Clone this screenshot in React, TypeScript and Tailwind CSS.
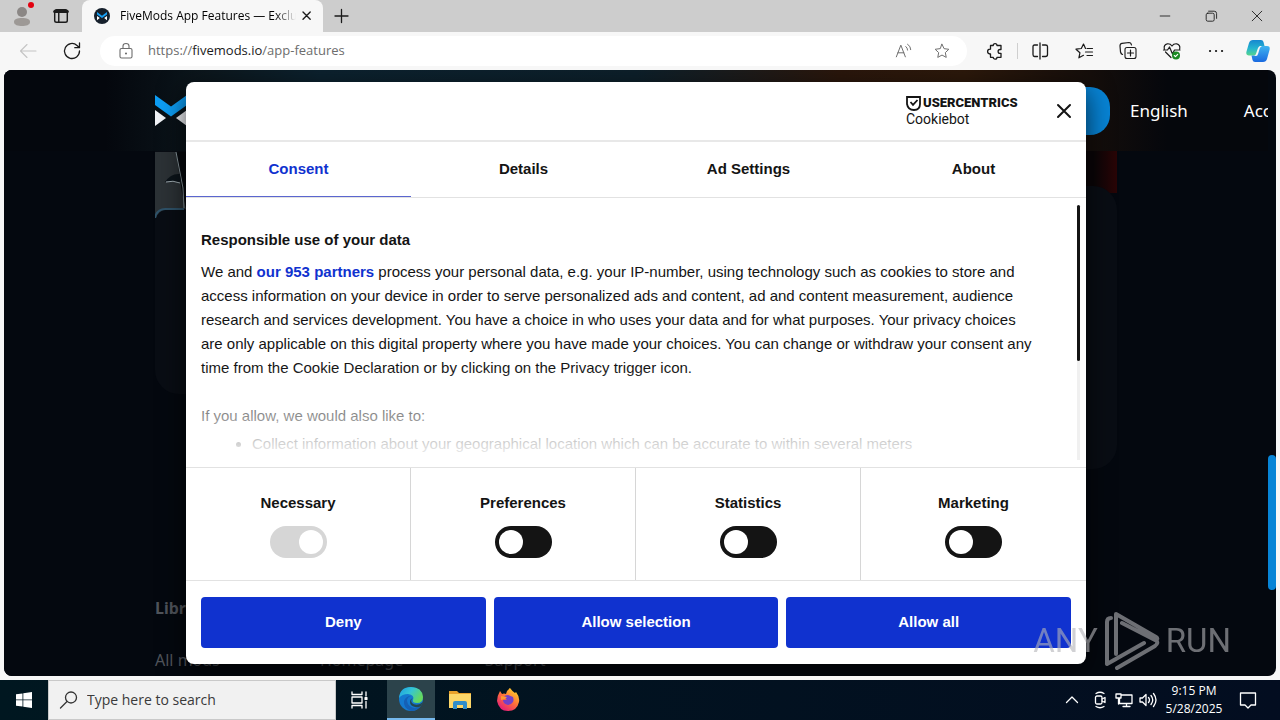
import { useState } from "react";
import type { ReactNode } from "react";
import clsx from "clsx";

const TABS = ["Consent", "Details", "Ad Settings", "About"];

const CATEGORIES = [
  { name: "Necessary", locked: true },
  { name: "Preferences", locked: false },
  { name: "Statistics", locked: false },
  { name: "Marketing", locked: false },
];

const ACTIONS = ["Deny", "Allow selection", "Allow all"];

interface IconProps {
  className?: string;
  children: ReactNode;
}

// 20x20 line icon used by the browser toolbar and the taskbar
function LineIcon({ className = "size-5", children }: IconProps) {
  return (
    <svg
      viewBox="0 0 20 20"
      className={clsx("shrink-0", className)}
      fill="none"
      stroke="currentColor"
      strokeWidth="1.1"
      strokeLinecap="round"
      strokeLinejoin="round"
      aria-hidden="true"
    >
      {children}
    </svg>
  );
}

const STAR = "M10 2.5l2.3 4.9 5.3.7-3.9 3.7 1 5.3L10 14.5l-4.7 2.6 1-5.3L2.4 8.1l5.3-.7z";

function TitleBar() {
  return (
    <div className="flex h-8 shrink-0 items-stretch bg-[#cdcdcd]">
      <div className="flex w-[82px] items-center gap-7 pl-3">
        <button aria-label="Profile" className="relative">
          <svg viewBox="0 0 20 20" className="size-5">
            <circle cx="10" cy="6" r="5" fill="#8b8785" />
            <path d="M2 16c0-3 3-4 8-4s8 1 8 4-4 4-8 4-8-1-8-4z" fill="#9d9996" />
          </svg>
          <span className="absolute -top-1 -right-0.5 size-1.5 rounded-full bg-[#e3000f]" />
        </button>
        <button aria-label="Tab actions" className="-ml-2">
          <LineIcon className="size-4.5">
            <rect x="3" y="3" width="14" height="14" rx="2" strokeWidth="1.6" />
            <path d="M3 5h14" strokeWidth="3.4" />
            <path d="M7.5 6v11" strokeWidth="1.6" />
          </LineIcon>
        </button>
      </div>
      <div className="flex w-[241px] items-center rounded-t-lg bg-[#f7f7f7] pr-2 pl-3">
        <svg viewBox="0 0 16 16" className="size-4 shrink-0" aria-hidden="true">
          <circle cx="8" cy="8" r="8" fill="#16202c" />
          <path d="M3 4l5 3.7L13 4v2.6L8 10 3 6.6z" fill="#18a0f5" />
          <path d="M3 8l2.8 2L3 12.2zM13 8l-2.8 2 2.8 2.2z" fill="#fff" />
        </svg>
        <span className="ml-2.5 w-[176px] overflow-hidden bg-linear-to-r from-black from-88% to-transparent bg-clip-text text-xs whitespace-nowrap text-transparent">
          FiveMods App Features — Exclusive
        </span>
        <button aria-label="Close tab" className="ml-auto">
          <LineIcon className="size-4">
            <path d="M5 5l9 9M14 5l-9 9" strokeWidth="1.7" />
          </LineIcon>
        </button>
      </div>
      <button aria-label="New tab" className="px-2">
        <LineIcon>
          <path d="M4 10h13M10.5 3.500v13" strokeWidth="1.3" />
        </LineIcon>
      </button>
      <div className="ml-auto flex">
        <button aria-label="Minimize" className="grid w-[46px] place-items-center">
          <LineIcon className="size-4">
            <path d="M4 10h12" />
          </LineIcon>
        </button>
        <button aria-label="Restore" className="grid w-[46px] place-items-center">
          <LineIcon className="size-4">
            <rect x="4" y="6.5" width="10" height="10" rx="2" />
            <path d="M7 4h7q3 0 3 3v6" />
          </LineIcon>
        </button>
        <button aria-label="Close window" className="grid w-[46px] place-items-center">
          <LineIcon className="size-4">
            <path d="M4 4l12 12M16 4L4 16" />
          </LineIcon>
        </button>
      </div>
    </div>
  );
}

function CopilotLogo() {
  return (
    <svg viewBox="0 0 24 24" className="size-6" aria-hidden="true">
      <defs>
        <linearGradient id="copilotLeft" x1="0" y1="0" x2="0" y2="1">
          <stop offset="0" stopColor="#1687d0" />
          <stop offset=".55" stopColor="#25b5cf" />
          <stop offset="1" stopColor="#56d58c" />
        </linearGradient>
        <linearGradient id="copilotRight" x1="0" y1="0" x2="0" y2="1">
          <stop offset="0" stopColor="#3fb4f0" />
          <stop offset="1" stopColor="#1a6ae0" />
        </linearGradient>
      </defs>
      <path d="M7 1h8q2 0 2.5 2l1 4h-3q-2 0-2.6 2l-1.5 5q-.8 2.5-3 2.5H3Q-.5 16.5.5 12.5L3 4q.9-3 4-3z" fill="url(#copilotLeft)" />
      <path d="M17 23H9q-2 0-2.5-2l-1-4.500h3q2 0 2.6-2l1.500-5q.8-2.500 3-2.500H21q3.500 0 2.500 4L21 20q-.9 3-4 3z" fill="url(#copilotRight)" />
      <path d="M14 7h2q-1.700.5-2.300 2.500l-1.500 5q-.7 2.500-2.200 2.500H8q1.500-.5 2.100-2.500l1.700-5q.6-2 2.200-2.500z" fill="#f7f7f7" />
    </svg>
  );
}

function Toolbar() {
  return (
    <div className="flex h-[38px] shrink-0 items-center bg-[#f7f7f7] pr-2.5 pl-[18px]">
      <button aria-label="Back" className="text-[#c4c4c4]">
        <LineIcon>
          <path d="M18 10H2.5M9 3.5L2.5 10 9 16.5" />
        </LineIcon>
      </button>
      <button aria-label="Refresh" className="ml-6">
        <LineIcon>
          <path d="M17.5 10A7.5 7.5 0 1 1 15 4.4l2.3 2.1M17.5 2v4.7h-4.7" strokeWidth="1.3" />
        </LineIcon>
      </button>
      <label className="ml-[18px] flex h-[30px] min-w-0 flex-1 items-center gap-3 rounded-full bg-white px-4 text-[#6d6d6d]">
        <LineIcon>
          <rect x="4" y="7.5" width="12" height="9.5" rx="1.5" />
          <path d="M7 7.5V5q0-2.500 3-2.500T13 5v2.500" />
          <circle cx="10" cy="12.5" r=".5" />
        </LineIcon>
        <span className="flex-1 text-[13px]">
          https://<span className="text-[#1b1b1b]">fivemods.io</span>/app-features
        </span>
        <button aria-label="Read aloud">
          <LineIcon className="size-4.5">
            <path d="M1.500 16.500l5-13 5 13M3.200 12h6.600M12 5q2 1.500 2 4M14 2.500q3.500 2 3.500 6" />
          </LineIcon>
        </button>
        <button aria-label="Add to favorites" className="ml-2">
          <LineIcon className="size-[18px]">
            <path d={STAR} />
          </LineIcon>
        </button>
      </label>
      <div className="ml-[18px] flex items-center gap-6">
        <button aria-label="Extensions">
          <LineIcon>
            <path d="M5.500 4.500h2.700a1.900 1.900 0 0 1 3.800 0h4v4h-1a1.900 1.900 0 0 0 0 3.800h1v4h-4a1.900 1.900 0 0 1-3.800 0H5.500V13H5a2.400 2.400 0 0 1 0-4.800h.5z" strokeWidth="1.300" />
          </LineIcon>
        </button>
        <div className="-mx-3 h-4 border-l border-[#cfcfcf]" />
        <button aria-label="Split screen">
          <LineIcon>
            <path d="M7.500 4h-3Q3 4 3 5.500v8q0 2 1.500 2h3M12.500 4h3q2 0 2 1.500v8q0 2-2 2h-3M10 2v16" strokeWidth="1.3" />
          </LineIcon>
        </button>
        <button aria-label="Favorites">
          <LineIcon>
            <path d="M11.500 7.500L9.500 3 7.300 7.500l-5.300.7 3.900 3.600-1 5 4.600-2.500M13 7.500h5.500M11.500 11h7M13 14.500h5.500" strokeWidth="1.2" />
          </LineIcon>
        </button>
        <button aria-label="Collections">
          <LineIcon>
            <rect x="7" y="6.500" width="11" height="11" rx="2" />
            <path d="M12.500 9v6M9.500 12h6M4.500 13.500Q3 13 2.500 11L2 5q0-2.500 2-2.700l7-.8q2 0 2.500 2.500" strokeWidth="1.2" />
          </LineIcon>
        </button>
        <button aria-label="Browser essentials">
          <LineIcon>
            <path d="M9 16.500L3.500 11M2.300 8q-.8-4.500 3-5.200 3-.3 4.700 2.200 1.700-2.500 4.700-2.200 3.800.7 3 5.200M1.500 9h4L7.500 6l3 7 2-4h5.500" strokeWidth="1.2" />
            <circle cx="14" cy="14.500" r="4" fill="#1c8a24" stroke="none" />
            <path d="M12.300 14.500l1.200 1.200 2.200-2.400" stroke="#fff" />
          </LineIcon>
        </button>
        <button aria-label="Settings and more">
          <LineIcon>
            <path d="M4 10h.1M10 10h.1M16 10h.1" strokeWidth="2.2" />
          </LineIcon>
        </button>
        <button aria-label="Copilot" className="-ml-1">
          <CopilotLogo />
        </button>
      </div>
    </div>
  );
}

/* Dimmed site content that stays visible around the consent dialog */
function SitePage() {
  return (
    <div className="flex h-full flex-col overflow-hidden bg-[#04080f]">
      <header className="shrink-0 bg-[linear-gradient(90deg,#04070d_8%,#0c171d_16%,#0c222f_25%,#0d202b_50%,#2b170c_66%,#2d190b_76%,#150e0b_86%,#05070c_92%)]">
        <div className="mx-auto flex h-[81px] w-full max-w-[962px] items-center">
          <svg viewBox="0 0 32 32" className="size-8" aria-label="FiveMods">
            <path d="M0 0l16 11.5L32 0v10L16 21.500 0 10z" fill="#0d9ef5" />
            <path d="M0 15l11 8-11 8zM32 15l-11 8 11 8z" fill="#f2f4f8" />
          </svg>
          <button className="ml-auto h-12 w-40 rounded-[20px] bg-[#0784d6]" aria-label="Download" />
          <nav className="flex w-[7px] font-['Noto_Sans'] text-[17px] whitespace-nowrap text-white">
            <a href="#language" className="ml-5">
              English
            </a>
            <a href="#account" className="ml-14">
              Account
            </a>
          </nav>
        </div>
      </header>
      <main className="mx-auto grid h-[430px] w-full max-w-[962px] shrink-0 grid-cols-2 items-start gap-4">
        <div className="h-[243px] overflow-hidden rounded-b-3xl bg-[#090d14]">
          <svg viewBox="0 0 100 67" className="h-[67px] w-[100px]" aria-hidden="true">
            <path d="M0 1h100v57H12Q3 60 1 67H0z" fill="#2c3236" />
            <path d="M21 1h79v57H31L27 42z" fill="#06090d" />
            <path d="M21 1l7 36 1 20" stroke="#8b999f" fill="none" />
            <path d="M0 67Q2 57 12 58h17" stroke="#2f536a" fill="none" strokeWidth="2" />
            <path d="M10 31q6-9 15-8l1 8z" fill="#0c141a" />
            <path d="M11 31q7-2 14 1" stroke="#a3afb4" fill="none" />
          </svg>
        </div>
        <div className="h-[318px] bg-[linear-gradient(90deg,#0a0507_95%,#2a0506)] bg-[length:100%_42px] bg-no-repeat pt-[35px]">
          <div className="h-full rounded-3xl bg-[#090d14]" />
        </div>
      </main>
      <footer className="mx-auto grid w-full max-w-[962px] grid-cols-[165px_165px_165px] gap-y-7 pt-[15px] font-['Noto_Sans'] text-base/6 text-[#50545b]">
        <h3 className="col-span-3 font-bold">Library</h3>
        <a href="#mods">All mods</a>
        <a href="#home">Homepage</a>
        <a href="#support">Support</a>
      </footer>
    </div>
  );
}

function UsercentricsLogo() {
  return (
    <div className="w-[117px] font-['Roboto',sans-serif] text-[#141414]">
      <div className="flex items-center gap-0.5 text-[13px]/4 font-black">
        <svg viewBox="0 0 15 15" className="size-[15px] shrink-0" fill="none" stroke="currentColor" strokeWidth="1.8" aria-hidden="true">
          <path d="M1 1h13v7q0 6-6 6T1 8z" />
          <path d="M4.500 6l2.500 2.800L11.500 4" />
        </svg>
        USERCENTRICS
      </div>
      <div className="text-sm/4">Cookiebot</div>
    </div>
  );
}

interface CategoryToggleProps {
  name: string;
  locked: boolean;
}

function CategoryToggle({ name, locked }: CategoryToggleProps) {
  const [checked, setChecked] = useState(locked);

  return (
    <label className="flex flex-col items-center gap-[11px] border-r border-[#d6d6d6] pt-[23px] pb-[22px] text-[15px]/6 font-bold last:border-r-0">
      {name}
      <input
        type="checkbox"
        role="switch"
        checked={checked}
        disabled={locked}
        onChange={(e) => setChecked(e.target.checked)}
        className="h-8 w-[57px] appearance-none rounded-full bg-[#141414] p-1 before:block before:size-6 before:rounded-full before:bg-white checked:before:ml-auto disabled:bg-[#d6d6d6]"
      />
    </label>
  );
}

function ConsentDialog() {
  const [activeTab, setActiveTab] = useState("Consent");

  return (
    <section
      role="dialog"
      aria-label="Cookie consent"
      className="w-full max-w-[900px] overflow-hidden rounded-lg bg-white font-['Liberation_Sans',Arial,sans-serif] text-[15px] text-[#141414] shadow-[0_8px_28px_rgba(0,0,0,0.7)]"
    >
      <div className="flex h-[60px] items-center justify-end gap-8 border-b-2 border-[#e8e8e8] pr-[13px]">
        <UsercentricsLogo />
        <button aria-label="Close">
          <svg viewBox="0 0 18 18" className="size-[18px]" stroke="currentColor" strokeWidth="2" strokeLinecap="round" aria-hidden="true">
            <path d="M3 3l12 12M15 3L3 15" />
          </svg>
        </button>
      </div>

      <div role="tablist" className="grid h-14 grid-cols-4 border-b border-[#e2e2e2]">
        {TABS.map((tab) => (
          <button
            key={tab}
            role="tab"
            aria-selected={tab === activeTab}
            onClick={() => setActiveTab(tab)}
            className={clsx(
              "border-b font-bold",
              tab === activeTab ? "border-[#5b66cf] text-[#1032cf]" : "border-transparent",
            )}
          >
            {tab}
          </button>
        ))}
      </div>

      <div className="relative h-[269px] overflow-hidden px-[15px] pt-[30px] leading-6">
        <h2 className="mb-2 font-bold">Responsible use of your data</h2>
        <p>
          We and{" "}
          <a href="#partners" className="font-bold text-[#1032cf]">
            our 953 partners
          </a>{" "}
          process your personal data, e.g. your IP-number, using technology such as cookies to store and
          <br />
          access information on your device in order to serve personalized ads and content, ad and content measurement, audience
          <br />
          research and services development. You have a choice in who uses your data and for what purposes. Your privacy choices
          <br />
          are only applicable on this digital property where you have made your choices. You can change or withdraw your consent any
          <br />
          time from the Cookie Declaration or by clicking on the Privacy trigger icon.
        </p>
        <p className="mt-6">If you allow, we would also like to:</p>
        <ul className="mt-1 list-disc pl-[51px]">
          <li>Collect information about your geographical location which can be accurate to within several meters</li>
        </ul>
        <div className="absolute inset-x-0 bottom-0 h-[100px] bg-linear-to-b from-white/0 to-white to-95%" />
        <div className="absolute top-[7px] right-[6px] bottom-[7px] w-[3px] bg-[#f0f0f0]">
          <div className="h-[156px] rounded-full bg-[#141414]" />
        </div>
      </div>

      <div className="grid grid-cols-4 border-y border-[#e2e2e2]">
        {CATEGORIES.map((category) => (
          <CategoryToggle key={category.name} {...category} />
        ))}
      </div>

      <div className="grid grid-cols-3 gap-2 px-[15px] py-4">
        {ACTIONS.map((action) => (
          <button key={action} className="h-[51px] rounded bg-[#1032cf] font-bold text-white">
            {action}
          </button>
        ))}
      </div>
    </section>
  );
}

function Watermark() {
  return (
    <div className="pointer-events-none absolute right-[45px] bottom-1 flex items-center gap-1.5 font-['Roboto',sans-serif] text-[33px] text-[#b4b4b8] opacity-60">
      <span>ANY</span>
      <svg viewBox="0 0 56 62" className="h-[62px] w-14" fill="none" stroke="currentColor" strokeWidth="4" strokeLinejoin="round" strokeLinecap="round" aria-hidden="true">
        <path d="M7 8q-4 0-4 4v42l37-21M12 44V4l40 23q3 2-1 3L18 13M3 54l9-5M13 58l38-22q4-3 1-6" />
      </svg>
      <span>RUN</span>
    </div>
  );
}

function EdgeLogo() {
  return (
    <svg viewBox="0 0 24 24" className="size-6" aria-hidden="true">
      <defs>
        <linearGradient id="edgeTop" x1="0" y1="0" x2="1" y2=".5">
          <stop offset="0" stopColor="#1b9de2" />
          <stop offset=".5" stopColor="#35c5d5" />
          <stop offset="1" stopColor="#66d95c" />
        </linearGradient>
      </defs>
      <circle cx="12" cy="12" r="12" fill="#1479cf" />
      <path d="M0 11Q1 0 12 0q11 0 12 10 0 6-6 6-5 0-4-3 2-5-5-6-6 0-9 4z" fill="url(#edgeTop)" />
      <path d="M12 9q-4 1-4 5 1 6 8 7 4 0 6-3-3 6-10 6-8-3-7-10 2-5 7-5z" fill="#1560b5" />
      <path d="M14 11q-3 2-1 5 3 3 8 1l3-2-2 4q-3 2-6 1-5-1-5-5 0-3 3-4z" fill="#24464f" />
    </svg>
  );
}

function FolderLogo() {
  return (
    <svg viewBox="0 0 24 24" className="size-6" aria-hidden="true">
      <path d="M1 3h8l2 2h12v15H1z" fill="#e9a12a" />
      <path d="M1 6h22v14H1z" fill="#fcd668" />
      <path d="M5 21v-6q0-2 2-2h10q2 0 2 2v6h-4v-4H9v4z" fill="#2f8dcb" />
    </svg>
  );
}

function FirefoxLogo() {
  return (
    <svg viewBox="0 0 24 24" className="size-6" aria-hidden="true">
      <defs>
        <linearGradient id="foxBody" x1=".9" y1="0" x2=".2" y2="1">
          <stop offset="0" stopColor="#ffe226" />
          <stop offset=".5" stopColor="#ff7139" />
          <stop offset="1" stopColor="#e3147f" />
        </linearGradient>
      </defs>
      <path d="M14 0q2 3 5 5l1-1q4 5 3 10-2 9-11 9T1 13q0-5 3-10l2 3q2-1 4 0 1-4 4-6z" fill="url(#foxBody)" />
      <path d="M8 9q1-2 4-2l5 2q1 3 0 5-2 3-5 3-5-1-5-5l4 0z" fill="#7440c8" />
      <path d="M5 8l6 1-2 2-4 1z" fill="#ff9a2f" />
    </svg>
  );
}

function Taskbar() {
  return (
    <footer className="flex h-10 shrink-0 items-stretch bg-linear-to-r from-[#001720] to-[#030d20] text-white">
      <button aria-label="Start" className="grid w-12 place-items-center">
        <svg viewBox="0 0 16 16" className="size-4" fill="#fff" aria-hidden="true">
          <path d="M0 2.3l6.5-.9v6.100H0zM7.300 1.300L16 0v7.500H7.300zM0 8.300h6.500v6.300L0 13.700zM7.300 8.300H16V16l-8.700-1.300z" />
        </svg>
      </button>
      <label className="flex w-72 items-center gap-2 border border-[#c9c9c9] bg-[#f1f1f1] px-2.5 text-[#333]">
        <LineIcon>
          <circle cx="12" cy="7.500" r="5.500" strokeWidth="1.3" />
          <path d="M8 11.500L1.500 18" strokeWidth="1.3" />
        </LineIcon>
        <input
          type="text"
          aria-label="Search"
          placeholder="Type here to search"
          className="min-w-0 flex-1 text-sm outline-none placeholder:text-[#3a3a3a]"
        />
      </label>
      <button aria-label="Task view" className="grid w-[51px] place-items-center pr-1">
        <LineIcon>
          <path d="M2 2v2.500h10V2M2 7h10v6H2zM2 18v-2.500h10V18M16 2v4M16 11.500V18" strokeWidth="1.3" />
          <rect x="15" y="7.5" width="2" height="2" fill="currentColor" />
        </LineIcon>
      </button>
      <button aria-label="Microsoft Edge" className="grid w-12 place-items-center border-b-2 border-[#76b9ed] bg-[#2c434b]">
        <EdgeLogo />
      </button>
      <button aria-label="File Explorer" className="grid w-[49px] place-items-center">
        <FolderLogo />
      </button>
      <button aria-label="Firefox" className="grid w-12 place-items-center">
        <FirefoxLogo />
      </button>
      <div className="ml-auto flex items-center gap-1">
        <LineIcon className="mr-1 size-5">
          <path d="M4.500 12.500L10 7l5.500 5.500" strokeWidth="1.3" />
        </LineIcon>
        <LineIcon>
          <rect x="5.5" y="6" width="6.5" height="8" rx="1.5" strokeWidth="1.3" />
          <path d="M12 9l3-1.500v5L12 11M6 3.500q4-2.500 8 0M6 16.500q4 2.500 8 0" strokeWidth="1.3" />
        </LineIcon>
        <LineIcon>
          <path d="M7 5h11v8.500H5.500V9M9 16.500h7M12.500 13.500v3M2 4h5v4H2zM4.500 8v6" strokeWidth="1.3" />
        </LineIcon>
        <LineIcon>
          <path d="M2 8v4h2.500L8 15.500v-11L4.500 8zM10.500 7.500q2 2.500 0 5M13 5.500q3.500 4.500 0 9M15.500 3.500q5 6.500 0 13" strokeWidth="1.3" />
        </LineIcon>
        <div className="w-16 text-center text-xs/[18px]">
          9:15 PM
          <br />
          5/28/2025
        </div>
        <button aria-label="Notifications" className="mr-[22px] ml-2">
          <LineIcon>
            <path d="M2.500 3h15v12H13l-3 3-3-3H2.500z" strokeWidth="1.3" />
          </LineIcon>
        </button>
      </div>
    </footer>
  );
}

export default function App() {
  return (
    <div className="flex h-screen flex-col overflow-hidden bg-[#f7f7f7] font-['Open_Sans','Noto_Sans',sans-serif] text-[#1b1b1b]">
      <TitleBar />
      <Toolbar />
      <div className="relative mx-1 mb-1 min-h-0 flex-1 overflow-hidden rounded-lg bg-[#04080f] pr-2">
        <SitePage />
        <div className="absolute top-[385px] right-0 h-[135px] w-2 rounded-full bg-[#0784d6]" />
        <div className="absolute inset-y-0 right-2 left-0 flex items-center justify-center">
          <ConsentDialog />
        </div>
        <Watermark />
      </div>
      <Taskbar />
    </div>
  );
}
